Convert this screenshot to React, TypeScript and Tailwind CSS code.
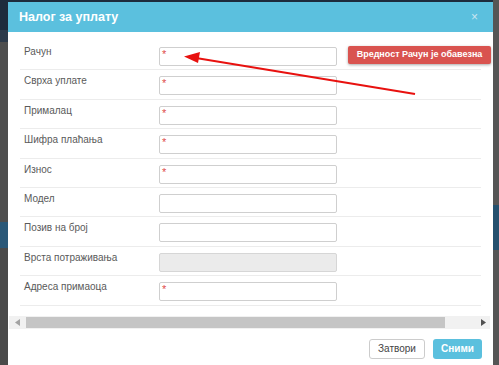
import React from "react";

const rows: { label: string; req: boolean; disabled?: boolean }[] = [
  { label: "Рачун", req: true },
  { label: "Сврха уплате", req: true },
  { label: "Прималац", req: true },
  { label: "Шифра плаћања", req: true },
  { label: "Износ", req: true },
  { label: "Модел", req: false },
  { label: "Позив на број", req: false },
  { label: "Врста потраживања", req: false, disabled: true },
  { label: "Адреса примаоца", req: true },
];

export default function App() {
  return (
    <div
      className="relative w-[499px] h-[365px] overflow-hidden flex bg-[#4b4b4b]"
      style={{ fontFamily: '"Liberation Sans", Arial, sans-serif' }}
    >
      {/* left backdrop strip */}
      <div className="w-[8px] flex flex-col shrink-0">
        <div className="h-[30px] bg-[#1d2b3c]" />
        <div className="h-[12px] bg-[#2c3a4a]" />
        <div className="h-[180px] bg-[#4e4e4e]" />
        <div className="h-[26px] bg-[#2a5878]" />
        <div className="flex-1 bg-[#4a4a4a]" />
      </div>

      {/* modal column */}
      <div className="flex-1 flex flex-col">
        <div className="h-[2px] bg-[#1d2b3c]" />
        <div className="flex-1 bg-white flex flex-col">
          {/* header */}
          <div className="h-[30px] bg-[#5bc0de] flex items-center justify-between pl-[11px] pr-[15px]">
            <span className="text-[12.5px] font-bold text-white">Налог за уплату</span>
            <span className="text-[12px] text-[#c9e6f1] leading-none">×</span>
          </div>

          {/* body rows */}
          <div className="pt-[9px] mx-[12px] flex flex-col">
            {rows.map((r) => (
              <div key={r.label} className="h-[29.4px] border-b border-[#ececec] flex items-start">
                <div className="w-[139px] pl-[4px] pt-[4px] text-[10px] text-[#5a5a5a] leading-[14px]">
                  {r.label}
                </div>
                <div
                  className={
                    "relative mt-[6px] w-[178px] h-[19px] border rounded-[2px] " +
                    (r.disabled ? "bg-[#ebebeb] border-[#d6d6d6]" : "bg-white border-[#cfcfcf]")
                  }
                >
                  {r.req && (
                    <span className="absolute left-[2px] top-[1px] text-[11px] leading-[10px] text-[#e04b4b]">*</span>
                  )}
                </div>
              </div>
            ))}
          </div>

          {/* horizontal scrollbar */}
          <div className="mt-[10px] ml-[1px] mr-[3px] h-[13px] bg-[#f1f1f1] flex items-center">
            <div className="w-[17px] flex items-center justify-center">
              <svg width="5" height="7" viewBox="0 0 5 7">
                <polygon points="5,0 5,7 0,3.5" fill="#a3a3a3" />
              </svg>
            </div>
            <div className="h-[11px] w-[419px] bg-[#c5c5c5]" />
            <div className="flex-1" />
            <div className="w-[14px] flex items-center justify-center">
              <svg width="5" height="7" viewBox="0 0 5 7">
                <polygon points="0,0 0,7 5,3.5" fill="#505050" />
              </svg>
            </div>
          </div>

          {/* footer */}
          <div className="mt-[10px] flex justify-end gap-[8px] pr-[11px]">
            <button className="w-[56px] h-[20px] border border-[#cccccc] rounded-[3px] bg-white text-[10px] text-[#444]">
              Затвори
            </button>
            <button className="w-[49px] h-[20px] rounded-[3px] bg-[#5bc0de] text-[10px] font-bold text-white">
              Сними
            </button>
          </div>
        </div>
      </div>

      {/* right backdrop strip */}
      <div className="w-[6px] flex flex-col shrink-0">
        <div className="h-[205px] bg-[#555555]" />
        <div className="h-[45px] bg-[#24506e]" />
        <div className="flex-1 bg-[#555555]" />
      </div>

      {/* validation tooltip */}
      <div className="absolute left-[348px] top-[46px] w-[143px] h-[18px] bg-[#d9534f] rounded-[2px] shadow-[0_1px_3px_rgba(0,0,0,0.35)] flex items-center justify-center">
        <span className="text-[9px] font-bold text-white">Вредност Рачун је обавезна</span>
      </div>

      {/* red annotation arrow */}
      <svg className="absolute left-0 top-0 pointer-events-none" width="499" height="365" viewBox="0 0 499 365">
        <line x1="415" y1="94" x2="196" y2="58" stroke="#e8110f" strokeWidth="2" />
        <polygon points="184,56.5 200,52 198,63" fill="#e8110f" />
      </svg>
    </div>
  );
}
